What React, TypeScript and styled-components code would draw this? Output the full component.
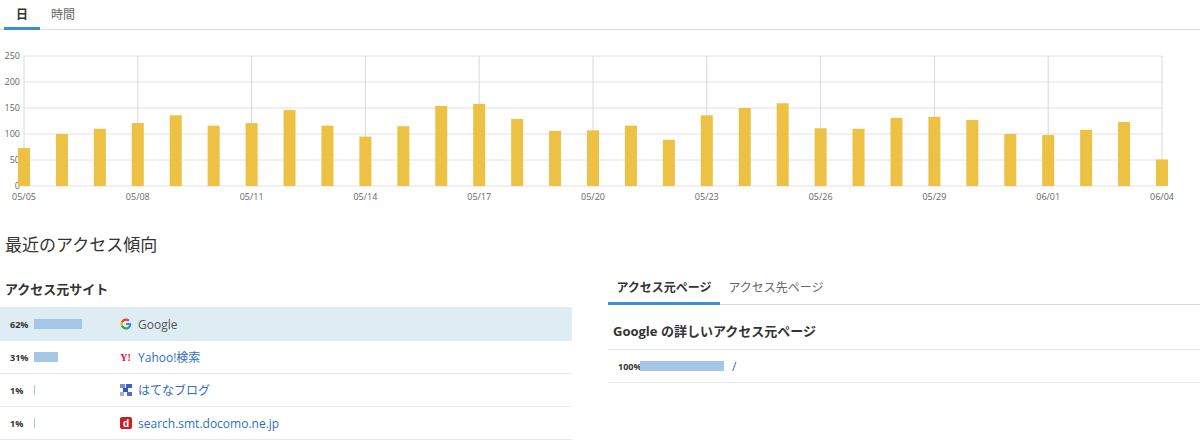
import styled, { createGlobalStyle } from 'styled-components';

const GlobalStyle = createGlobalStyle`
  body { margin: 0; font-family: "Open Sans", "Noto Sans CJK JP", sans-serif; color: #333; background: #fff; }
`;

const values = [73, 100, 110, 121, 136, 116, 121, 146, 116, 95, 115, 154, 158, 129, 106, 107, 116, 89, 136, 150, 159, 111, 110, 131, 133, 127, 100, 98, 108, 123, 51];
const labels = ['05/05', '05/08', '05/11', '05/14', '05/17', '05/20', '05/23', '05/26', '05/29', '06/01', '06/04'];

const Page = styled.div`
  width: 1200px;
  height: 444px;
  overflow: hidden;
`;

const Tabs = styled.div<{ $pad?: number }>`
  display: flex;
  border-bottom: 1px solid #d5dde3;
  padding-left: ${p => p.$pad ?? 4}px;
`;

const Tab = styled.div<{ $active?: boolean; $h: number; $w?: number }>`
  height: ${p => p.$h}px;
  ${p => p.$w ? `width: ${p.$w}px;` : 'padding: 0 12px;'}
  display: flex;
  align-items: center;
  justify-content: center;
  font-size: 12px;
  font-weight: ${p => p.$active ? 700 : 400};
  color: ${p => p.$active ? '#333' : '#666'};
  border-bottom: 3px solid ${p => p.$active ? '#3a8fd6' : 'transparent'};
  margin-bottom: -1px;
  box-sizing: border-box;
`;

const ChartWrap = styled.div`
  margin-top: 10px;
`;

const Title = styled.h2`
  margin: 16px 0 0 5px;
  font-size: 17px;
  font-weight: 400;
  color: #333;
`;

const Columns = styled.div`
  display: grid;
  grid-template-columns: 572px 592px;
  column-gap: 36px;
  margin-top: 15px;
`;

const SubTitle = styled.h3<{ $mt?: number }>`
  margin: ${p => p.$mt ?? 0}px 0 0 5px;
  height: 36px;
  line-height: 36px;
  font-size: 13px;
  font-weight: 700;
  color: #333;
`;

const List = styled.div`
  border-top: 1px solid #e6ebef;
`;

const Row = styled.div<{ $hl?: boolean }>`
  display: flex;
  align-items: center;
  height: 32px;
  border-bottom: 1px solid #e6ebef;
  background: ${p => p.$hl ? '#deedf4' : 'transparent'};
  padding-left: 10px;
`;

const Pct = styled.span<{ $w: number }>`
  width: ${p => p.$w}px;
  font-size: 9px;
  font-weight: 700;
  color: #333;
`;

const BarTrack = styled.div<{ $w: number }>`
  width: ${p => p.$w}px;
  display: flex;
`;

const Bar = styled.div`
  height: 10px;
  background: #a6c6e6;
`;

const Site = styled.span<{ $hl?: boolean }>`
  display: flex;
  align-items: center;
  gap: 6px;
  font-size: 12px;
  color: ${p => p.$hl ? '#555' : '#2e6fc0'};
`;

const Icon = styled.span`
  width: 13px;
  height: 13px;
  display: inline-flex;
  align-items: center;
  justify-content: center;
`;

const Chart = () => {
  const x0 = 24, x1 = 1162, yT = 56, yB = 186;
  const step = (x1 - x0) / 30;
  const y = (v: number) => yB - (v / 250) * (yB - yT);
  return (
    <svg width="1200" height="170" viewBox="0 40 1200 170">
      {[0, 50, 100, 150, 200, 250].map(v => (
        <g key={v}>
          <line x1={x0} x2={x1} y1={y(v)} y2={y(v)} stroke="#e2e2e2" />
          <text x={20} y={y(v) + 3} fontSize="9" fill="#666" textAnchor="end" fontFamily="Open Sans">{v}</text>
        </g>
      ))}
      {labels.map((l, i) => {
        const x = x0 + i * 3 * step;
        return (
          <g key={l}>
            <line x1={x} x2={x} y1={yT} y2={yB} stroke="#d8d8d8" />
            <text x={x} y={200} fontSize="9" fill="#666" textAnchor="middle" fontFamily="Open Sans">{l}</text>
          </g>
        );
      })}
      {values.map((v, i) => (
        <rect key={i} x={x0 + i * step - 6} y={y(v)} width={12} height={yB - y(v)} fill="#edc143" />
      ))}
    </svg>
  );
};

const GoogleIcon = () => (
  <svg width="12" height="12" viewBox="0 0 24 24">
    <path d="M22.5 12.2c0-.8-.1-1.5-.2-2.2H12v4.2h5.9a5 5 0 0 1-2.2 3.3v2.7h3.6c2-1.9 3.2-4.7 3.2-8z" fill="#4285F4" />
    <path d="M12 23c3 0 5.5-1 7.3-2.7l-3.6-2.8c-1 .7-2.2 1.1-3.7 1.1-2.9 0-5.3-1.900-6.2-4.5H2.1v2.9A11 11 0 0 0 12 23z" fill="#34A853" />
    <path d="M5.8 14.1a6.6 6.6 0 0 1 0-4.2V7H2.1a11 11 0 0 0 0 9.9z" fill="#FBBC05" />
    <path d="M12 5.4c1.6 0 3 .6 4.2 1.6l3.1-3.1A11 11 0 0 0 2.1 7l3.7 2.9C6.7 7.3 9.1 5.4 12 5.4z" fill="#EA4335" />
  </svg>
);

const YahooIcon = () => (
  <span style={{ color: '#ff0033', fontSize: 10, fontWeight: 900, fontFamily: 'Liberation Serif, serif' }}>Y!</span>
);

const HatenaIcon = () => (
  <svg width="12" height="12" viewBox="0 0 12 12">
    <rect x="0" y="0" width="5" height="4" fill="#6e8fd8" />
    <rect x="6" y="0" width="6" height="4" fill="#3a63c8" />
    <rect x="3" y="4" width="5" height="4" fill="#2f55c0" />
    <rect x="0" y="8" width="4" height="4" fill="#9bb0e6" />
    <rect x="7" y="8" width="5" height="4" fill="#4a70d0" />
  </svg>
);

const DocomoIcon = () => (
  <svg width="12" height="12" viewBox="0 0 12 12">
    <rect width="12" height="12" rx="2" fill="#c4212a" />
    <text x="6" y="10" fontSize="10" fontWeight="700" fill="#fff" textAnchor="middle" fontFamily="Liberation Sans">d</text>
  </svg>
);

const sites = [
  { pct: 62, name: 'Google', icon: <GoogleIcon />, hl: true },
  { pct: 31, name: 'Yahoo!検索', icon: <YahooIcon /> },
  { pct: 1, name: 'はてなブログ', icon: <HatenaIcon /> },
  { pct: 1, name: 'search.smt.docomo.ne.jp', icon: <DocomoIcon /> },
];

export default function App() {
  return (
    <Page>
      <GlobalStyle />
      <Tabs>
        <Tab $active $h={30} $w={36}>日</Tab>
        <Tab $h={30} $w={46}>時間</Tab>
      </Tabs>
      <ChartWrap>
        <Chart />
      </ChartWrap>
      <Title>最近のアクセス傾向</Title>
      <Columns>
        <div>
          <SubTitle $mt={0}>アクセス元サイト</SubTitle>
          <List>
            {sites.map(s => (
              <Row key={s.name} $hl={s.hl}>
                <Pct $w={24}>{s.pct}%</Pct>
                <BarTrack $w={85}>
                  <Bar style={{ width: Math.max(1, Math.round(s.pct / 62 * 48)) }} />
                </BarTrack>
                <Site $hl={s.hl}><Icon>{s.icon}</Icon>{s.name}</Site>
              </Row>
            ))}
          </List>
        </div>
        <div>
          <Tabs $pad={0}>
            <Tab $active $h={34} $w={112}>アクセス元ページ</Tab>
            <Tab $h={34} $w={112}>アクセス先ページ</Tab>
          </Tabs>
          <SubTitle $mt={8}>Google の詳しいアクセス元ページ</SubTitle>
          <List>
            <Row>
              <Pct $w={22}>100%</Pct>
              <BarTrack $w={92}>
                <Bar style={{ width: 84 }} />
              </BarTrack>
              <Site>/</Site>
            </Row>
          </List>
        </div>
      </Columns>
    </Page>
  );
}
